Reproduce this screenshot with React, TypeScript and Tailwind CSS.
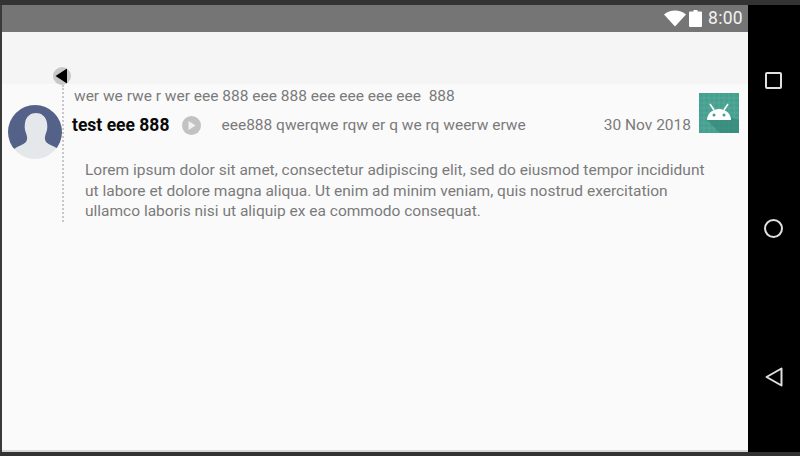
export default function App() {
  return (
    <div className="w-[800px] h-[456px] flex flex-col overflow-hidden bg-[#2f2f2f] font-['Roboto',sans-serif]">
      <div className="h-[5px] shrink-0 bg-[#333333]" />
      <div className="flex flex-1 min-h-0">
        <div className="w-[2px] shrink-0 bg-[#3a3a3a]" />
        <div className="flex-1 flex flex-col min-w-0 bg-[#fafafa]">
          <div className="h-[27px] shrink-0 bg-[#757575] flex items-center justify-end pr-[5px] text-white">
            <svg width="22" height="17" viewBox="0 0 22 17" className="mr-[3px]">
              <path d="M0 4.500C3 2 7 .5 11 .5s8 1.500 11 4L11 16.500z" fill="#ffffff" />
            </svg>
            <svg width="13" height="17" viewBox="0 0 13 17" className="mr-[6px]">
              <path d="M4.500 0h4v1.500H12a1 1 0 0 1 1 1V16a1 1 0 0 1-1 1H1a1 1 0 0 1-1-1V2.500a1 1 0 0 1 1-1h3.500z" fill="#ffffff" />
            </svg>
            <span className="text-[17.500px] leading-none tracking-[0.3px] text-[#f2f2f2]">8:00</span>
          </div>
          <div className="h-[52px] shrink-0 bg-[#f5f5f5]" />
          <div className="relative flex-1">
            <div className="absolute left-[51px] top-[-17px] w-[18px] h-[18px] rounded-full bg-[#c8c8c8] flex items-center overflow-hidden">
              <svg width="18" height="18" viewBox="0 0 18 18">
                <path d="M14 1.500v15L2.500 9z" fill="#000000" />
              </svg>
            </div>
            <div className="absolute left-[60px] top-[1px] h-[137px] border-l-2 border-dotted border-[#c8c8c8]" />
            <div className="absolute left-[6px] top-[21px] w-[54px] h-[54px] rounded-full overflow-hidden bg-[#e4e8ea]">
              <svg width="54" height="54" viewBox="0 0 54 54">
                <path d="M0 0H54V41L50 44C46 41 41 40 38 37C36 34 37 31 38 28C39.500 25 39.500 21 39 18C38 11 33 8 28 8S18 11 17 18C16.500 21 16.500 25 18 28C19 31 20 34 18 37C15 40 10 41 6 44L0 41Z" fill="#54628a" />
              </svg>
            </div>
            <div className="pl-[70px] pr-[9px] pt-[3px]">
              <div className="pl-[2px] text-[15.500px] leading-[18px] text-[#7a7a7a] whitespace-pre">wer we rwe r wer eee 888 eee 888 eee eee eee eee  888</div>
              <div className="flex items-center h-[27px] mt-[7px]">
                <span className="text-[17.500px] font-bold text-[#0a0a0a] leading-none whitespace-nowrap">test eee 888</span>
                <div className="w-[19px] h-[19px] rounded-full bg-[#c2c2c2] ml-[13px] flex items-center justify-center">
                  <svg width="9" height="9" viewBox="0 0 9 9">
                    <path d="M1.500 0v9L8.500 4.500z" fill="#f2f2f2" />
                  </svg>
                </div>
                <span className="ml-[20px] text-[15.500px] leading-none text-[#7a7a7a] whitespace-nowrap">eee888 qwerqwe rqw er q we rq weerw erwe</span>
                <span className="ml-auto text-[15.500px] leading-none text-[#7a7a7a] whitespace-nowrap">30 Nov 2018</span>
                <div className="w-[40px] h-[40px] ml-[8px] -mt-[25px] bg-[#46a08f] relative overflow-hidden shrink-0">
                  <svg width="40" height="40" viewBox="0 0 40 40" className="absolute inset-0">
                    <path d="M5 0v40M10 0v40M15 0v40M20 0v40M25 0v40M30 0v40M35 0v40M0 5h40M0 10h40M0 15h40M0 20h40M0 25h40M0 30h40M0 35h40" stroke="#5fb0a1" strokeWidth="0.6" />
                    <path d="M8 27L21 40h19V27l-9-3z" fill="#2f7f72" opacity="0.55" />
                    <path d="M8 27c0-6 5-11 12-11s12 5 12 11z" fill="#ffffff" />
                    <path d="M11 11l4 6M29 11l-4 6" stroke="#ffffff" strokeWidth="1.600" />
                    <circle cx="15" cy="22" r="1.500" fill="#46a08f" />
                    <circle cx="25" cy="22" r="1.500" fill="#46a08f" />
                  </svg>
                </div>
              </div>
              <p className="ml-[13px] mt-[21px] w-[630px] text-[15.500px] leading-[20.500px] text-[#7a7a7a]">
                Lorem ipsum dolor sit amet, consectetur adipiscing elit, sed do eiusmod tempor incididunt ut labore et dolore magna aliqua. Ut enim ad minim veniam, quis nostrud exercitation ullamco laboris nisi ut aliquip ex ea commodo consequat.
              </p>
            </div>
          </div>
          <div className="h-[2px] shrink-0 bg-[#d8d8d8]" />
        </div>
        <div className="w-[52px] shrink-0 bg-black flex flex-col items-center pt-[67px] pb-[65px] justify-between pr-[1px]">
          <div className="w-[17px] h-[17px] rounded-[2px] border-2 border-[#e0e0e0]" />
          <div className="w-[19px] h-[19px] rounded-full border-2 border-[#e0e0e0]" />
          <svg width="18" height="20" viewBox="0 0 18 20">
            <path d="M16.500 1.500v17L1.500 10z" fill="none" stroke="#e0e0e0" strokeWidth="2" strokeLinejoin="round" />
          </svg>
        </div>
      </div>
      <div className="h-[4px] shrink-0 bg-[#333333]" />
    </div>
  );
}
